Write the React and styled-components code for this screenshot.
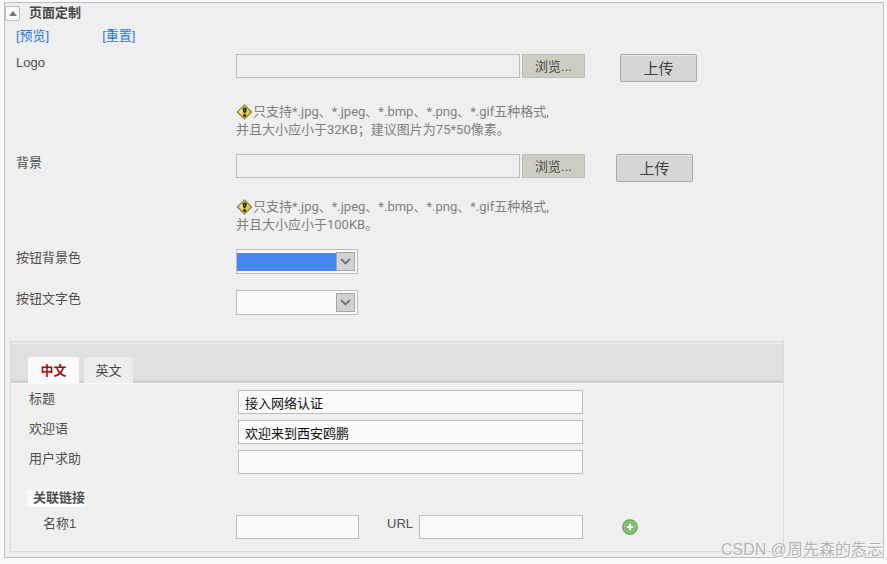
import React, { useState } from 'react';
import styled, { createGlobalStyle } from 'styled-components';

const sans = '"Liberation Sans", "Noto Sans CJK SC", sans-serif';

const Hint = ({ children }) => (
    <HintText>
        <HintLine>
            <WarnIcon />
            只支持*.jpg、*.jpeg、*.bmp、*.png、*.gif五种格式,
        </HintLine>
        <HintLine>{children}</HintLine>
    </HintText>
);

const WarnIcon = () => (
    <svg width="17" height="16" viewBox="0 0 17 16" aria-hidden="true">
        <path d="M8.5 .8 L15.6 8 L8.5 15.2 L1.4 8 Z" fill="#e5cc32" stroke="#85804c" strokeWidth="1.1" strokeLinejoin="round" />
        <path d="M7.2 2.8 L2.8 7.6 L6.2 10.6 Z" fill="#f9f0a2" opacity="0.7" />
        <path d="M6.4 4.6 Q8.6 2.6 10.7 4.6 Q10.8 7.2 9.2 9.2 H8 Q6.6 7 6.4 4.6 Z" fill="#23211a" />
        <path d="M8 4.6 L8.6 7.2" stroke="#99967a" strokeWidth="0.8" />
        <circle cx="8.6" cy="11.6" r="1.5" fill="#23211a" />
    </svg>
);

const FileRow = ({ id, label, gap }) => (
    <>
        <Label htmlFor={id}>{label}</Label>
        <Controls>
            <FileInput id={id} type="text" readOnly />
            <BrowseButton type="button">浏览...</BrowseButton>
            <UploadButton type="button" $gap={gap}>上传</UploadButton>
        </Controls>
    </>
);

const ColorSelect = ({ id, label, color }) => (
    <>
        <Label htmlFor={id}>{label}</Label>
        <SelectBox>
            <Select id={id} $color={color}>
                <option value={color} aria-label={color}></option>
            </Select>
            <Arrow>
                <svg width="11" height="7" viewBox="0 0 11 7" aria-hidden="true">
                    <path d="M1 1 L5.5 5.4 L10 1" fill="none" stroke="#707070" strokeWidth="2" />
                </svg>
            </Arrow>
        </SelectBox>
    </>
);

const App = () => {
    const [lang, setLang] = useState('zh');

    return (
        <>
            <GlobalStyle />
            <Panel>
                <PanelHeader>
                    <Toggle type="button" aria-label="收起">
                        <svg width="8" height="5" viewBox="0 0 8 5" aria-hidden="true">
                            <path d="M4 0 L8 5 H0 Z" fill="#777" />
                        </svg>
                    </Toggle>
                    <Title>页面定制</Title>
                </PanelHeader>
                <Actions>
                    <a href="#preview">[预览]</a>
                    <a href="#reset">[重置]</a>
                </Actions>

                <FormRow $height={52}>
                    <FileRow id="logo" label="Logo" gap={35} />
                </FormRow>
                <HintRow $height={48}>
                    <Hint>并且大小应小于32KB；建议图片为75*50像素。</Hint>
                </HintRow>
                <FormRow $height={47}>
                    <FileRow id="background" label="背景" gap={31} />
                </FormRow>
                <HintRow $height={48}>
                    <Hint>并且大小应小于100KB。</Hint>
                </HintRow>
                <FormRow $height={41}>
                    <ColorSelect id="buttonColor" label="按钮背景色" color="#4787f5" />
                </FormRow>
                <FormRow $height={54}>
                    <ColorSelect id="buttonText" label="按钮文字色" color="#fafafa" />
                </FormRow>

                <TabPanel>
                    <TabBar role="tablist">
                        <Tab type="button" role="tab" aria-selected={lang === 'zh'} $active={lang === 'zh'} onClick={() => setLang('zh')}>中文</Tab>
                        <Tab type="button" role="tab" aria-selected={lang === 'en'} $active={lang === 'en'} onClick={() => setLang('en')}>英文</Tab>
                    </TabBar>
                    <TabBody>
                        <TextRow>
                            <TabLabel htmlFor="title">标题</TabLabel>
                            <TextInput id="title" type="text" defaultValue="接入网络认证" />
                        </TextRow>
                        <TextRow>
                            <TabLabel htmlFor="welcome">欢迎语</TabLabel>
                            <TextInput id="welcome" type="text" defaultValue="欢迎来到西安鸥鹏" />
                        </TextRow>
                        <TextRow>
                            <TabLabel htmlFor="help">用户求助</TabLabel>
                            <TextInput id="help" type="text" />
                        </TextRow>
                        <SubTitle>关联链接</SubTitle>
                        <LinkRow>
                            <LinkLabel htmlFor="name1">名称1</LinkLabel>
                            <NameInput id="name1" type="text" />
                            <UrlLabel htmlFor="url1">URL</UrlLabel>
                            <UrlInput id="url1" type="text" />
                            <AddButton type="button" aria-label="添加">
                                <svg width="16" height="16" viewBox="0 0 16 16" aria-hidden="true">
                                    <circle cx="8" cy="8" r="7.5" fill="#68a95f" stroke="#6ba565" strokeWidth="0.8" />
                                    <circle cx="8" cy="8" r="5.8" fill="#77bb68" stroke="#a3d397" strokeWidth="0.9" />
                                    <path d="M8 4.8 V11.2 M4.8 8 H11.2" stroke="#fff" strokeWidth="2.2" />
                                </svg>
                            </AddButton>
                        </LinkRow>
                    </TabBody>
                </TabPanel>
                <Watermark>CSDN @周先森的怣忈</Watermark>
            </Panel>
        </>
    );
};

export default App;

const GlobalStyle = createGlobalStyle`
    * {
        box-sizing: border-box;
    }
    body {
        margin: 0;
        background: #fafafa;
        color: #505050;
        font-family: ${sans};
        font-size: 13px;
        line-height: 18px;
    }
    button, input, select {
        margin: 0;
        font-family: inherit;
        font-size: 13px;
    }
`;

const Panel = styled.section`
    position: relative;
    margin: 2px 3px 0 4px;
    padding-bottom: 5px;
    border: 1px solid #bdbdc0;
    background: #efefef;
`;

const PanelHeader = styled.div`
    display: flex;
    align-items: center;
    height: 20px;
`;

const Toggle = styled.button`
    display: flex;
    align-items: center;
    justify-content: center;
    width: 15px;
    height: 15px;
    padding: 0;
    border: 1px solid #bbb;
    border-radius: 2px;
    background: #fafafa;
`;

const Title = styled.h2`
    margin: 0 0 0 9px;
    font-size: 13px;
    font-weight: bold;
    color: #484848;
`;

const Actions = styled.nav`
    display: flex;
    gap: 53px;
    padding: 4px 11px 0;
    height: 28px;
    a {
        color: #2a76e0;
        text-decoration: none;
    }
`;

const FormRow = styled.div`
    display: flex;
    align-items: flex-start;
    height: ${({ $height }) => $height}px;
    padding-left: 11px;
    padding-top: 3px;
`;

const HintRow = styled.div`
    height: ${({ $height }) => $height}px;
    padding-left: 231px;
`;

const Label = styled.label`
    flex: none;
    width: 220px;
`;

const Controls = styled.div`
    display: flex;
    align-items: flex-start;
`;

const Field = styled.input`
    height: 24px;
    padding: 0 6px;
    border: 1px solid #bcbcc0;
    background: #fafafa;
    color: #111;
    outline: none;
`;

const FileInput = styled(Field)`
    width: 284px;
    margin-right: 2px;
    background: #efefef;
`;

const BrowseButton = styled.button`
    width: 63px;
    height: 24px;
    padding: 0 0 2px;
    border: 1px solid #bcbcbc;
    background: #cdcdc2;
    color: #484848;
`;

const UploadButton = styled.button`
    width: 77px;
    height: 28px;
    margin-left: ${({ $gap }) => $gap}px;
    padding: 0 0 2px;
    border: 1px solid #a9a9a9;
    border-radius: 2px;
    background: #d6d6d6;
    box-shadow: inset 0 1px #e8e8e8;
    color: #404040;
    && {
        font-size: 15px;
    }
`;

const HintText = styled.div`
    color: #808080;
    font-family: Roboto, "Noto Sans CJK SC", sans-serif;
`;

const HintLine = styled.div`
    display: flex;
    align-items: center;
    white-space: nowrap;
`;

const SelectBox = styled.div`
    display: flex;
    align-items: center;
    width: 122px;
    height: 25px;
    padding-right: 2px;
    border: 1px solid #bcbcc0;
    background: #fafafa;
`;

const Select = styled.select`
    flex: 1;
    height: 18px;
    border: 0;
    border-radius: 0;
    appearance: none;
    background: ${({ $color }) => $color};
    outline: none;
`;

const Arrow = styled.span`
    display: flex;
    align-items: center;
    justify-content: center;
    width: 19px;
    height: 19px;
    border: 1px solid #a6a6a6;
    background: #d2d2d2;
`;

const TabPanel = styled.div`
    max-width: 774px;
    margin-left: 5px;
    border: 1px solid #d9d9d9;
`;

const TabBar = styled.div`
    display: flex;
    align-items: flex-end;
    gap: 5px;
    height: 41px;
    padding-left: 17px;
    border-top: 2px solid #ececec;
    background: linear-gradient(#e0e0e0 34px, #c8c8c8);
`;

const Tab = styled.button`
    width: ${({ $active }) => ($active ? 51 : 49)}px;
    height: 26px;
    padding: 0 0 2px;
    border: 0;
    border-radius: 3px 3px 0 0;
    background: ${({ $active }) => ($active ? '#fafafa' : '#ededed')};
    color: ${({ $active }) => ($active ? '#a00d18' : '#484848')};
    font-weight: ${({ $active }) => ($active ? 'bold' : 'normal')};
`;

const TabBody = styled.div`
    padding: 6px 0 12px 18px;
    border-top: 1px solid #fafafa;
`;

const TextRow = styled.div`
    display: flex;
    height: 30px;
`;

const TabLabel = styled.label`
    width: 209px;
`;

const TextInput = styled(Field)`
    width: 345px;
`;

const SubTitle = styled.h3`
    width: 59px;
    height: 18px;
    margin: 9px 0 8px -2px;
    padding-left: 6px;
    background: #fafafa;
    font-size: 13px;
    line-height: 18px;
    white-space: nowrap;
`;

const LinkRow = styled.div`
    display: flex;
`;

const LinkLabel = styled.label`
    width: 207px;
    padding-left: 14px;
`;

const NameInput = styled(Field)`
    width: 123px;
`;

const UrlLabel = styled.label`
    width: 60px;
    padding-left: 28px;
`;

const UrlInput = styled(Field)`
    width: 164px;
`;

const AddButton = styled.button`
    align-self: center;
    height: 16px;
    margin-left: 39px;
    padding: 0;
    border: 0;
    background: none;
`;

const Watermark = styled.div`
    position: absolute;
    right: 0;
    bottom: -3px;
    color: #b4b4b4;
    font-size: 16px;
    line-height: 20px;
    text-shadow: 1px 1px #fafafa;
`;
